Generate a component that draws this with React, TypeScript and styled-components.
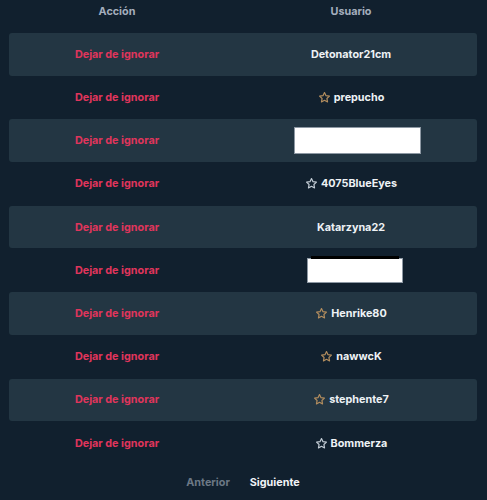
import React from "react";
import styled, { createGlobalStyle } from "styled-components";

const Global = createGlobalStyle`
  html, body { margin: 0; padding: 0; background: #11202e; }
  body { font-family: "Inter", "Liberation Sans", sans-serif; }
`;

const Page = styled.div`
  width: 487px;
  height: 500px;
  background: #11202e;
  padding: 0 10px 0 9px;
  box-sizing: border-box;
  display: flex;
  flex-direction: column;
`;

const Grid = styled.div`
  display: grid;
  grid-template-columns: 216px 1fr;
  align-items: center;
`;

const HeaderRow = styled(Grid)`
  height: 33px;
  align-items: start;
  padding-top: 5px;
  box-sizing: border-box;
`;

const HeadCell = styled.div`
  text-align: center;
  color: #a4aebd;
  font-size: 10.8px;
  font-weight: 700;
`;

const Body = styled.div`
  display: flex;
  flex-direction: column;
  gap: 0.5px;
`;

const Row = styled(Grid)<{ $striped: boolean }>`
  height: 42.7px;
  border-radius: 3px;
  background: ${(p) => (p.$striped ? "#233643" : "transparent")};
`;

const Action = styled.button`
  justify-self: center;
  background: none;
  border: none;
  padding: 0;
  font-family: inherit;
  color: #e0355c;
  font-size: 10.8px;
  font-weight: 700;
  cursor: pointer;
`;

const UserCell = styled.div`
  display: flex;
  justify-content: center;
  align-items: center;
  gap: 3px;
  color: #eef2f5;
  font-size: 10.8px;
  font-weight: 700;
`;

const Redacted = styled.div<{ $w: number; $h: number; $dx: number; $bar?: boolean }>`
  position: relative;
  width: ${(p) => p.$w}px;
  height: ${(p) => p.$h}px;
  margin-left: ${(p) => p.$dx}px;
  background: #fff;
  border: 1px solid #8d98a3;
  box-sizing: border-box;
  ${(p) =>
    p.$bar
      ? `&::before { content: ""; position: absolute; left: 3px; right: 3px; top: -3px; height: 3px; background: #000; }`
      : ""}
`;

const Pager = styled.div`
  display: flex;
  justify-content: center;
  gap: 20px;
  padding-top: 12px;
  font-size: 10.8px;
  font-weight: 700;
`;

const PageLink = styled.span<{ $active: boolean }>`
  color: ${(p) => (p.$active ? "#f1f4f7" : "#6c7885")};
`;

const Star = ({ color }: { color: string }) => (
  <svg width="13" height="13" viewBox="0 0 24 24" fill="none" stroke={color} strokeWidth="2.2" strokeLinejoin="round">
    <path d="M12 2.8l2.8 5.8 6.3.9-4.6 4.4 1.1 6.3L12 17.2l-5.6 3 1.1-6.3L2.9 9.5l6.3-.9z" />
  </svg>
);

type U = { name?: string; star?: "gold" | "gray"; redact?: { w: number; h: number; dx: number; bar?: boolean } };

const users: U[] = [
  { name: "Detonator21cm" },
  { name: "prepucho", star: "gold" },
  { redact: { w: 127, h: 27, dx: 12 } },
  { name: "4075BlueEyes", star: "gray" },
  { name: "Katarzyna22" },
  { redact: { w: 96, h: 25, dx: 7, bar: true } },
  { name: "Henrike80", star: "gold" },
  { name: "nawwcK", star: "gold" },
  { name: "stephente7", star: "gold" },
  { name: "Bommerza", star: "gray" },
];

export default function App() {
  return (
    <>
      <Global />
      <Page>
        <HeaderRow>
          <HeadCell>Acción</HeadCell>
          <HeadCell>Usuario</HeadCell>
        </HeaderRow>
        <Body>
          {users.map((u, i) => (
            <Row key={i} $striped={i % 2 === 0}>
              <Action>Dejar de ignorar</Action>
              <UserCell>
                {u.redact ? (
                  <Redacted $w={u.redact.w} $h={u.redact.h} $dx={u.redact.dx} $bar={u.redact.bar} />
                ) : (
                  <>
                    {u.star && <Star color={u.star === "gold" ? "#b38d5e" : "#c3ccd5"} />}
                    <span>{u.name}</span>
                  </>
                )}
              </UserCell>
            </Row>
          ))}
        </Body>
        <Pager>
          <PageLink $active={false}>Anterior</PageLink>
          <PageLink $active={true}>Siguiente</PageLink>
        </Pager>
      </Page>
    </>
  );
}
